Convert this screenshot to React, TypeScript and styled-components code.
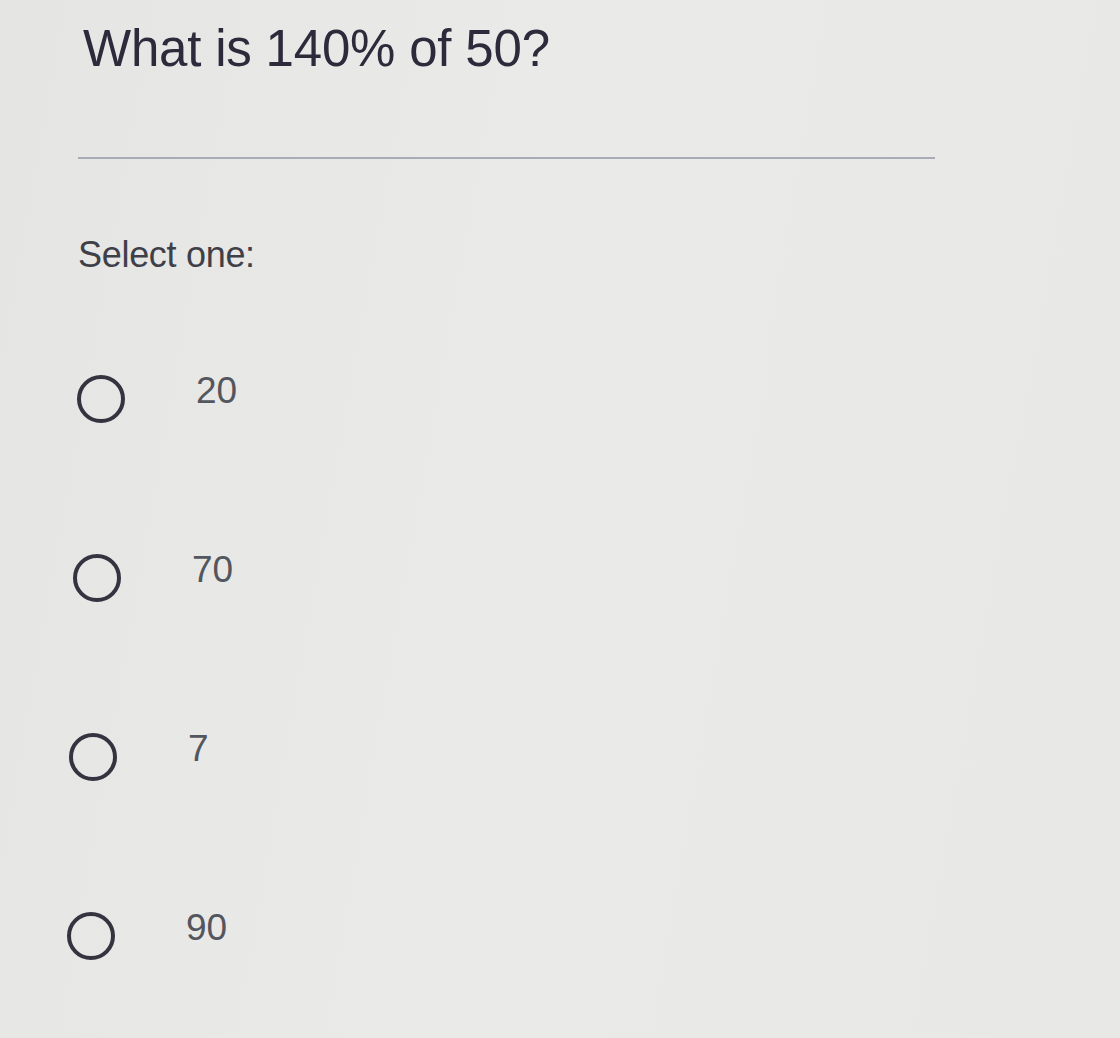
import styled, { createGlobalStyle } from "styled-components";

type Option = {
  value: string;
  indent: number;
};

// the photo leans a little, so each row sits a few px further left
const options: Option[] = [
  { value: "20", indent: -1 },
  { value: "70", indent: -5 },
  { value: "7", indent: -9 },
  { value: "90", indent: -11 },
];

export default function App() {
  return (
    <>
      <GlobalStyle />
      <Page>
        <Question>What is 140% of 50?</Question>
        <Divider />
        <Prompt>Select one:</Prompt>
        <OptionList>
          {options.map((option) => (
            <OptionRow key={option.value} indent={option.indent}>
              <Radio />
              <OptionLabel>{option.value}</OptionLabel>
            </OptionRow>
          ))}
        </OptionList>
      </Page>
    </>
  );
}

const GlobalStyle = createGlobalStyle`
  html, body {
    margin: 0;
    padding: 0;
  }
  body {
    font-family: "Liberation Sans", Arial, sans-serif;
    background: #e8e8e6;
  }
`;

const Page = styled.div`
  width: 1120px;
  height: 1038px;
  box-sizing: border-box;
  padding: 19px 0 0 78px;
  background: linear-gradient(100deg, #e5e5e3 0%, #eaeae8 45%, #e8e8e6 100%);
  display: flex;
  flex-direction: column;
  overflow: hidden;
`;

const Question = styled.div`
  font-size: 51px;
  line-height: 60px;
  color: #2d2b3b;
  padding-left: 5px;
  letter-spacing: -0.2px;
`;

const Divider = styled.div`
  margin-top: 78px;
  width: 857px;
  height: 2px;
  background: #a9acb6;
`;

const Prompt = styled.div`
  margin-top: 74px;
  font-size: 36px;
  line-height: 43px;
  color: #3f3f49;
  letter-spacing: -0.3px;
`;

const OptionList = styled.div`
  margin-top: 99px;
  display: flex;
  flex-direction: column;
  gap: 131px;
`;

const OptionRow = styled.div<{ indent: number }>`
  display: flex;
  align-items: flex-start;
  margin-left: ${({ indent }) => indent}px;
`;

const Radio = styled.div`
  width: 48px;
  height: 48px;
  box-sizing: border-box;
  border: 4px solid #34333f;
  border-radius: 50%;
  flex-shrink: 0;
`;

const OptionLabel = styled.div`
  margin-left: 71px;
  margin-top: -3px;
  font-size: 37px;
  line-height: 38px;
  color: #54565e;
`;
